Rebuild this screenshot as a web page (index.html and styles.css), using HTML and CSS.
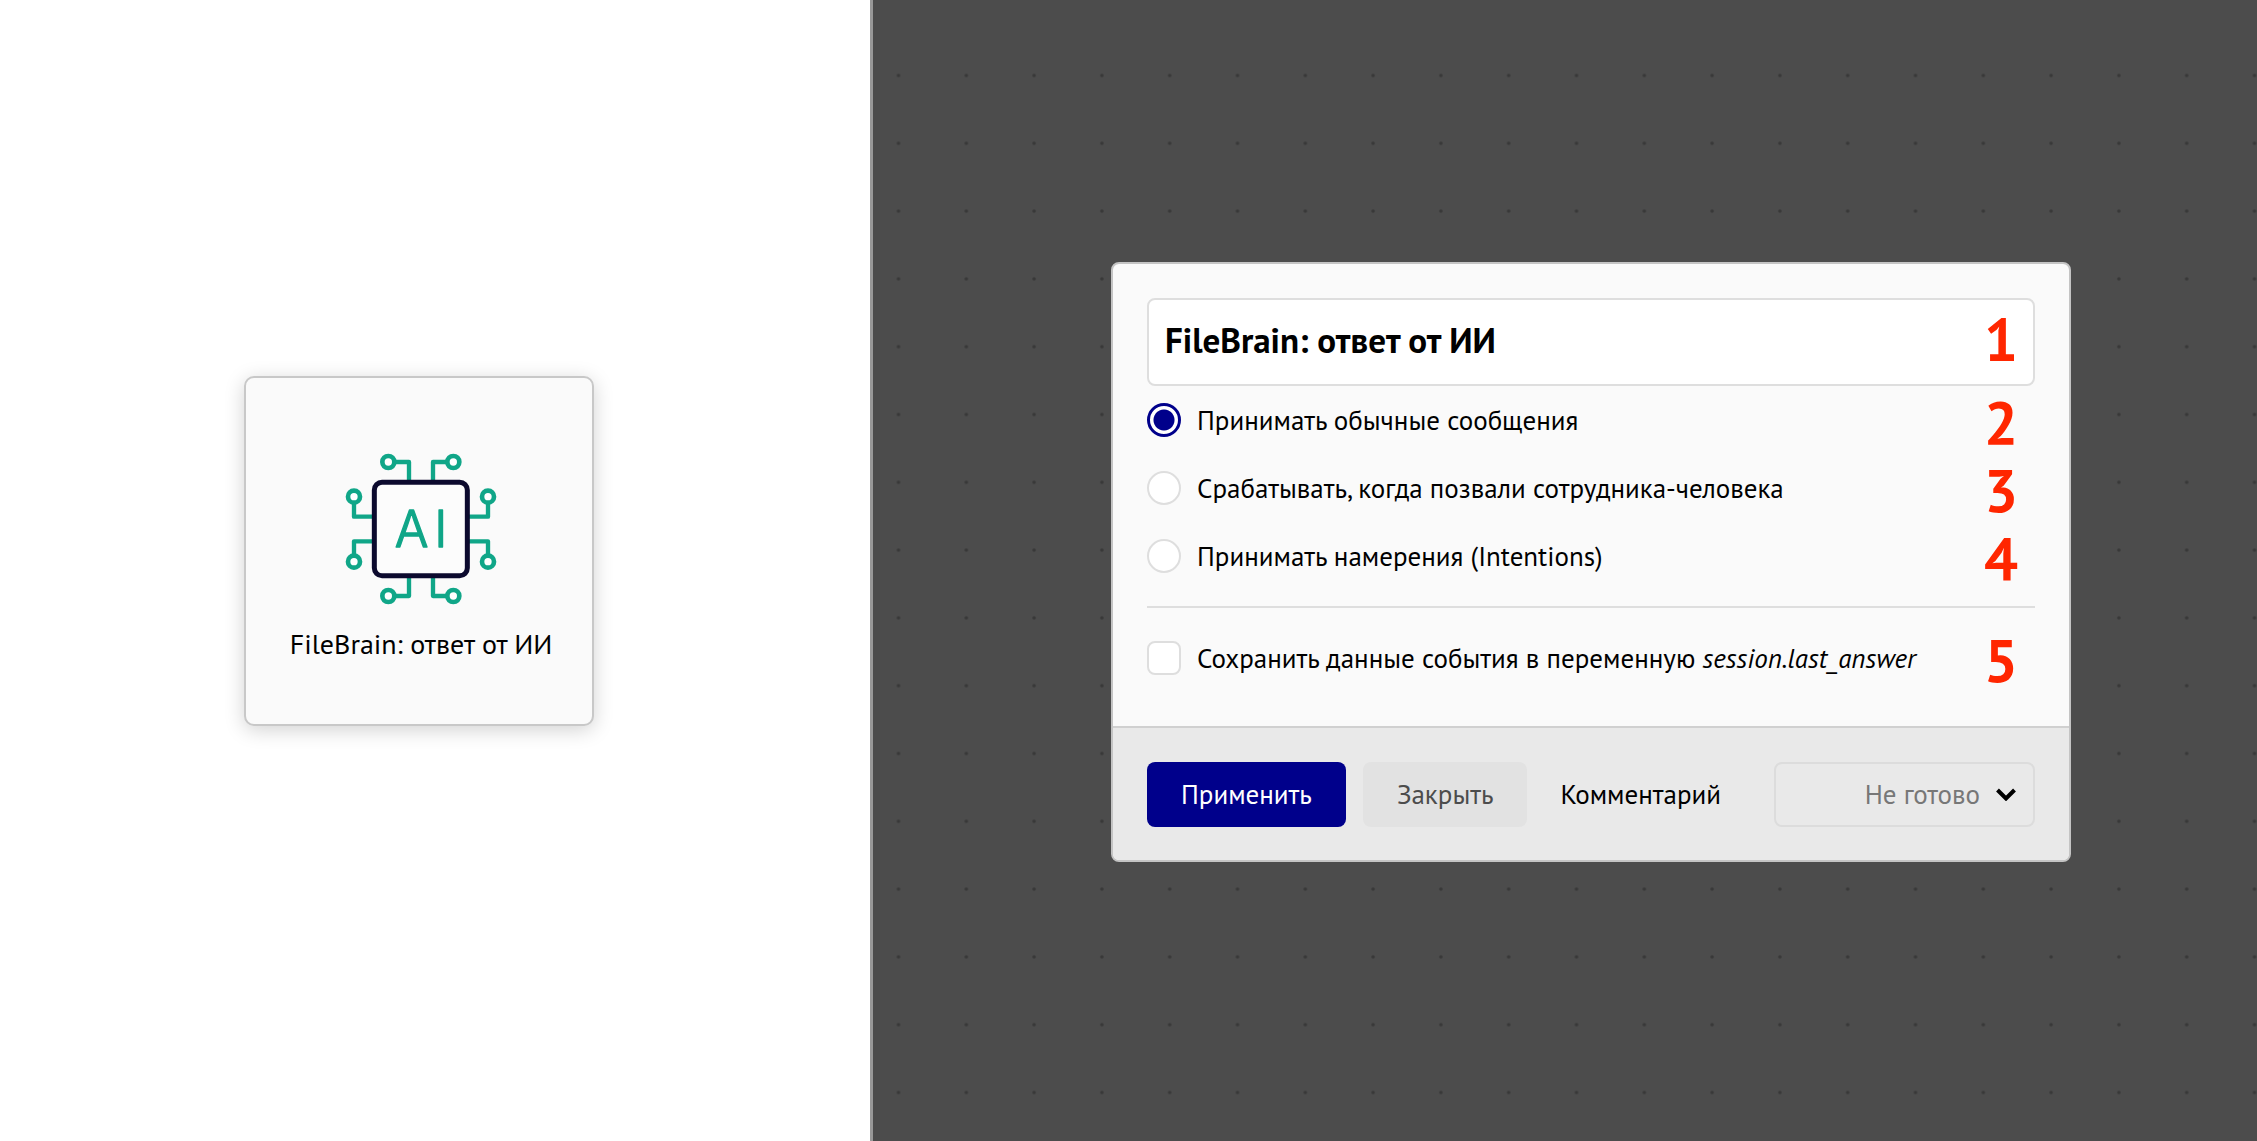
FILE: index.html
```html
<!DOCTYPE html>
<html lang="ru">
<head>
  <meta charset="utf-8">
  <meta name="viewport" content="width=device-width, initial-scale=1">
  <title>FileBrain: ответ от ИИ</title>
  <link rel="stylesheet" href="styles.css">
</head>
<body>
  <main class="layout">
    <aside class="sidebar">
      <article class="node-card">
        <svg class="node-icon" viewBox="42 38 462 462" aria-hidden="true">
          <g class="icon-trace">
            <path d="M194 68H237V128"/>
            <path d="M351 68H309V128"/>
            <path d="M72 190V232H130"/>
            <path d="M474 190V232H416"/>
            <path d="M72 348V306H130"/>
            <path d="M474 348V306H416"/>
            <path d="M194 470H237V412"/>
            <path d="M351 470H309V412"/>
          </g>
          <g class="icon-ring">
            <circle cx="175" cy="68" r="18"/>
            <circle cx="370" cy="68" r="18"/>
            <circle cx="72" cy="172" r="18"/>
            <circle cx="474" cy="172" r="18"/>
            <circle cx="72" cy="367" r="18"/>
            <circle cx="474" cy="367" r="18"/>
            <circle cx="175" cy="470" r="18"/>
            <circle cx="370" cy="470" r="18"/>
          </g>
          <rect class="icon-chip" x="133" y="129" width="279" height="280" rx="23"/>
          <text class="icon-text" x="194 313" y="322">AI</text>
        </svg>
        <h2 class="node-title">FileBrain: ответ от ИИ</h2>
      </article>
    </aside>

    <section class="canvas">
      <svg class="canvas-grid" aria-hidden="true">
        <defs>
          <pattern id="dots" x="-8.4" y="41.6" width="67.8" height="67.8" patternUnits="userSpaceOnUse">
            <circle cx="33.9" cy="33.9" r="1.8"/>
          </pattern>
        </defs>
        <rect y="42" width="100%" height="100%" fill="url(#dots)"/>
      </svg>

      <form class="dialog">
        <div class="dialog-body">
          <div class="title-field">
            <input class="title-input" type="text" value="FileBrain: ответ от ИИ" aria-label="Название">
            <span class="mark mark-title">1</span>
          </div>
          <div class="options">
            <div class="option">
              <input class="radio" type="radio" name="mode" id="mode-messages" checked>
              <label for="mode-messages">Принимать обычные сообщения</label>
              <span class="mark">2</span>
            </div>
            <div class="option">
              <input class="radio" type="radio" name="mode" id="mode-human">
              <label for="mode-human">Срабатывать, когда позвали сотрудника-человека</label>
              <span class="mark">3</span>
            </div>
            <div class="option">
              <input class="radio" type="radio" name="mode" id="mode-intents">
              <label for="mode-intents">Принимать намерения (Intentions)</label>
              <span class="mark">4</span>
            </div>
            <hr class="divider">
            <div class="option">
              <input class="checkbox" type="checkbox" id="save-answer">
              <label for="save-answer">Сохранить данные события в переменную <em>session.last_answer</em></label>
              <span class="mark">5</span>
            </div>
          </div>
        </div>
        <footer class="dialog-footer">
          <button class="button button-primary" type="button">Применить</button>
          <button class="button button-muted" type="button">Закрыть</button>
          <button class="button button-plain" type="button">Комментарий</button>
          <div class="status">
            <select class="status-select" aria-label="Статус">
              <option>Не готово</option>
              <option>Готово</option>
            </select>
            <svg class="status-arrow" viewBox="0 0 20 13" aria-hidden="true"><path d="M1.5 2L10 10.500L18.500 2"/></svg>
          </div>
        </footer>
      </form>
    </section>
  </main>
</body>
</html>
```

FILE: styles.css
```css
* {
  box-sizing: border-box;
}

body {
  margin: 0;
  background: #fff;
  color: #000;
  font-family: "PT Sans", "Noto Sans", sans-serif;
  font-size: 27px;
  line-height: 34px;
}

.layout {
  display: grid;
  grid-template-columns: 873fr 1384fr;
  min-height: 100vh;
}

.sidebar {
  display: flex;
  align-items: center;
  justify-content: center;
  padding: 0 32px 39px 0;
  border-right: 3px solid #989898;
}

.node-card {
  display: flex;
  flex-direction: column;
  align-items: center;
  justify-content: center;
  gap: 21px;
  width: 350px;
  height: 350px;
  padding: 10px 0 0 4px;
  border: 2px solid #c8c8c8;
  border-radius: 10px;
  background: #fafafa;
  box-shadow: 0 4px 20px rgba(0, 0, 0, 0.18);
}

.node-icon {
  width: 154px;
  height: 154px;
}

.icon-trace {
  fill: none;
  stroke: #10a688;
  stroke-width: 13;
  stroke-linejoin: round;
}

.icon-ring {
  fill: #fff;
  stroke: #10a688;
  stroke-width: 14;
}

.icon-chip {
  fill: #fcfcfc;
  stroke: #0c0a2e;
  stroke-width: 15;
}

.icon-text {
  fill: #10a688;
  stroke: #10a688;
  stroke-width: 4;
  stroke-linejoin: round;
  font-family: Inter, sans-serif;
  font-size: 150px;
  font-weight: 300;
}

.node-title {
  margin: 0;
  font-size: 28px;
  font-weight: 400;
}

.canvas {
  position: relative;
  display: flex;
  align-items: center;
  justify-content: center;
  padding: 0 0 17px 52px;
  background: #4c4c4c;
}

.canvas-grid {
  position: absolute;
  inset: 0;
  width: 100%;
  height: 100%;
  fill: #383838;
}

.dialog {
  position: relative;
  width: 960px;
  border: 2px solid #c4c4c4;
  border-radius: 8px;
  background: #fafafa;
  overflow: hidden;
}

.dialog-body {
  padding: 34px 34px 51px;
}

.title-field {
  position: relative;
  display: flex;
}

.title-input {
  width: 100%;
  height: 88px;
  padding: 0 80px 4px 16px;
  border: 2px solid #dedede;
  border-radius: 8px;
  background: #fff;
  color: #000;
  font: inherit;
  font-size: 35px;
  font-weight: 700;
}

.options {
  display: flex;
  flex-direction: column;
  gap: 34px;
  padding-top: 17px;
}

.option {
  display: flex;
  align-items: center;
  gap: 16px;
  height: 34px;
}

.radio,
.checkbox {
  appearance: none;
  flex: none;
  width: 34px;
  height: 34px;
  margin: 0;
  border: 2px solid #dedede;
  background: #fff;
}

.radio {
  border-radius: 50%;
}

.radio:checked {
  border: 3px solid #00008b;
  background: radial-gradient(circle, #00008b 10px, #fff 11px);
}

.checkbox {
  border-radius: 8px;
}

.divider {
  width: 100%;
  height: 2px;
  margin: -1px 0;
  border: 0;
  background: #dedede;
}

.mark {
  margin-left: auto;
  padding: 4px 17px 0 0;
  color: #ff2600;
  font-size: 60px;
  font-weight: 700;
}

.mark-title {
  position: absolute;
  top: 20px;
  right: 0;
}

.dialog-footer {
  display: flex;
  align-items: center;
  gap: 17px;
  padding: 34px 34px 33px;
  border-top: 2px solid #d0d0d0;
  background: #e9e9e9;
}

.button {
  height: 65px;
  padding: 0 34px 2px;
  border: 0;
  border-radius: 8px;
  color: #000;
  font: inherit;
}

.button-primary {
  background: #00008b;
  color: #fff;
}

.button-muted {
  background: #e2e2e2;
  color: #4c4c4c;
}

.button-plain {
  padding: 0 16px 2px;
  background: none;
}

.status {
  position: relative;
  width: 261px;
  margin-left: auto;
}

.status-select {
  appearance: none;
  display: block;
  width: 100%;
  height: 65px;
  padding: 0 53px 2px 16px;
  border: 2px solid #dcdcdc;
  border-radius: 8px;
  background: none;
  color: #777;
  font: inherit;
  text-align-last: right;
}

.status-arrow {
  position: absolute;
  top: 26px;
  right: 19px;
  width: 20px;
  height: 13px;
  fill: none;
  stroke: #000;
  stroke-width: 4;
  pointer-events: none;
}
```
